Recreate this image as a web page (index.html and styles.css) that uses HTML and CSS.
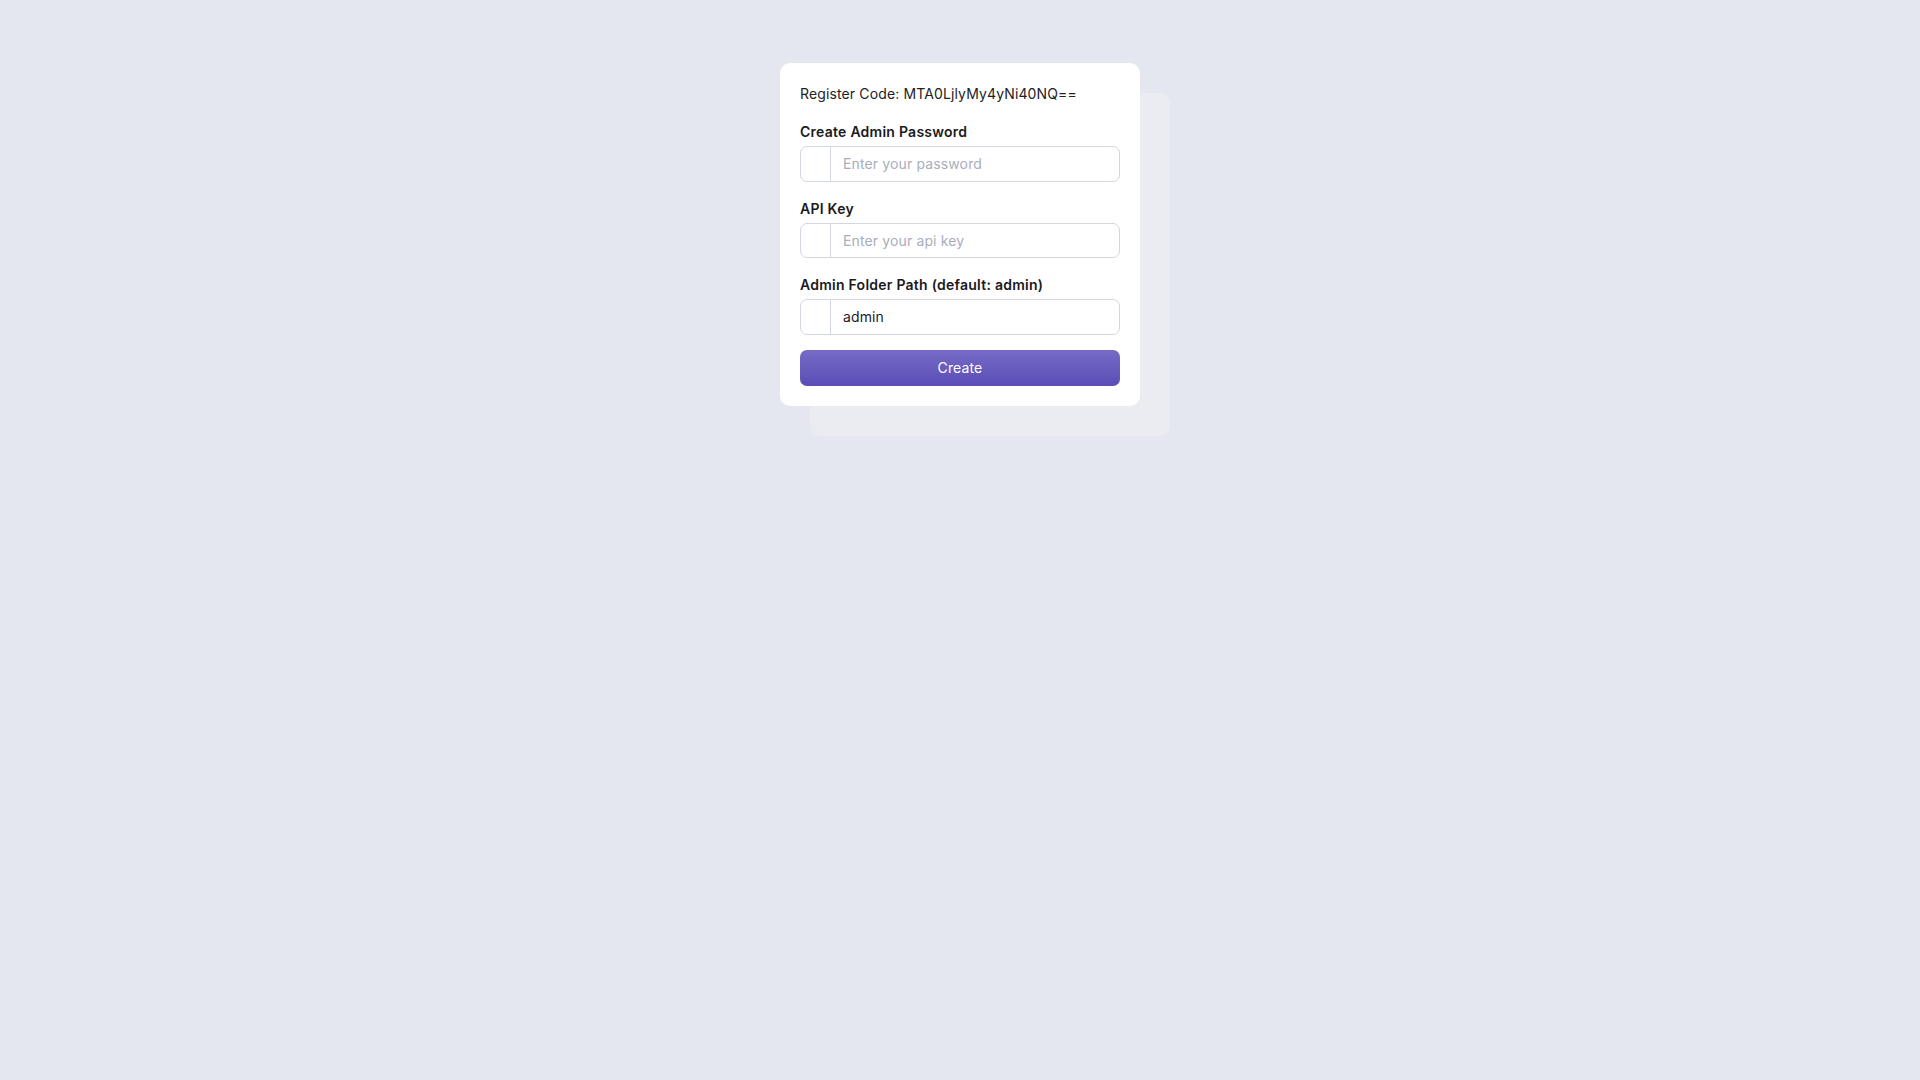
FILE: index.html
```html
<!DOCTYPE html>
<html lang="en">
<head>
<meta charset="utf-8">
<title>Register</title>
<link rel="stylesheet" href="styles.css">
</head>
<body>
<div class="stage">
  <div class="stack">
    <div class="back-card"></div>
    <form class="card">
      <p class="code">Register Code: MTA0LjlyMy4yNi40NQ==</p>
      <div class="group">
        <label class="label">Create Admin Password</label>
        <div class="field">
          <span class="addon"></span>
          <input class="input" type="password" placeholder="Enter your password">
        </div>
      </div>
      <div class="group">
        <label class="label">API Key</label>
        <div class="field">
          <span class="addon"></span>
          <input class="input" type="text" placeholder="Enter your api key">
        </div>
      </div>
      <div class="group group-last">
        <label class="label">Admin Folder Path (default: admin)</label>
        <div class="field">
          <span class="addon"></span>
          <input class="input" type="text" value="admin">
        </div>
      </div>
      <button class="btn" type="button">Create</button>
    </form>
  </div>
</div>
</body>
</html>
```

FILE: styles.css
```css
* { box-sizing: border-box; }
html, body {
  margin: 0;
  padding: 0;
  height: 100%;
}
body {
  background: #e4e7ef;
  font-family: Inter, "Noto Sans", sans-serif;
  font-size: 14px;
  color: #1c1c1e;
}
.stage {
  display: flex;
  justify-content: center;
  padding-top: 63px;
}
.stack {
  position: relative;
  width: 360px;
}
.back-card {
  position: absolute;
  left: 30px;
  top: 30px;
  width: 360px;
  height: 100%;
  background: #eaecf2;
  border-radius: 10px;
}
.card {
  position: relative;
  background: #ffffff;
  border-radius: 10px;
  padding: 20px 20px 20px;
  display: flex;
  flex-direction: column;
}
.code {
  margin: 0 0 17px;
  line-height: 22px;
  letter-spacing: 0.13px;
  color: #222226;
}
.group {
  display: flex;
  flex-direction: column;
  margin-bottom: 17px;
}
.group-last {
  margin-bottom: 15px;
}
.label {
  font-weight: 600;
  line-height: 20px;
  margin-bottom: 4px;
  letter-spacing: 0.25px;
  color: #1a1a1c;
}
.field {
  display: flex;
  height: 35.5px;
  border: 1px solid #d3d6e3;
  border-radius: 7px;
  overflow: hidden;
  background: #fff;
}
.addon {
  width: 30px;
  flex: none;
  border-right: 1px solid #d3d6e3;
}
.input {
  flex: 1;
  min-width: 0;
  border: 0;
  outline: none;
  padding: 0 12px;
  font-family: inherit;
  font-size: 14px;
  letter-spacing: 0.13px;
  color: #1c1c1e;
  background: transparent;
}
.input::placeholder {
  color: #a9adbd;
}
.btn {
  height: 36px;
  border: 0;
  border-radius: 7px;
  background: linear-gradient(#766bc6, #5a4db6);
  color: #ffffff;
  font-family: inherit;
  font-size: 14px;
  font-weight: 400;
  letter-spacing: 0.13px;
  cursor: pointer;
}
```
